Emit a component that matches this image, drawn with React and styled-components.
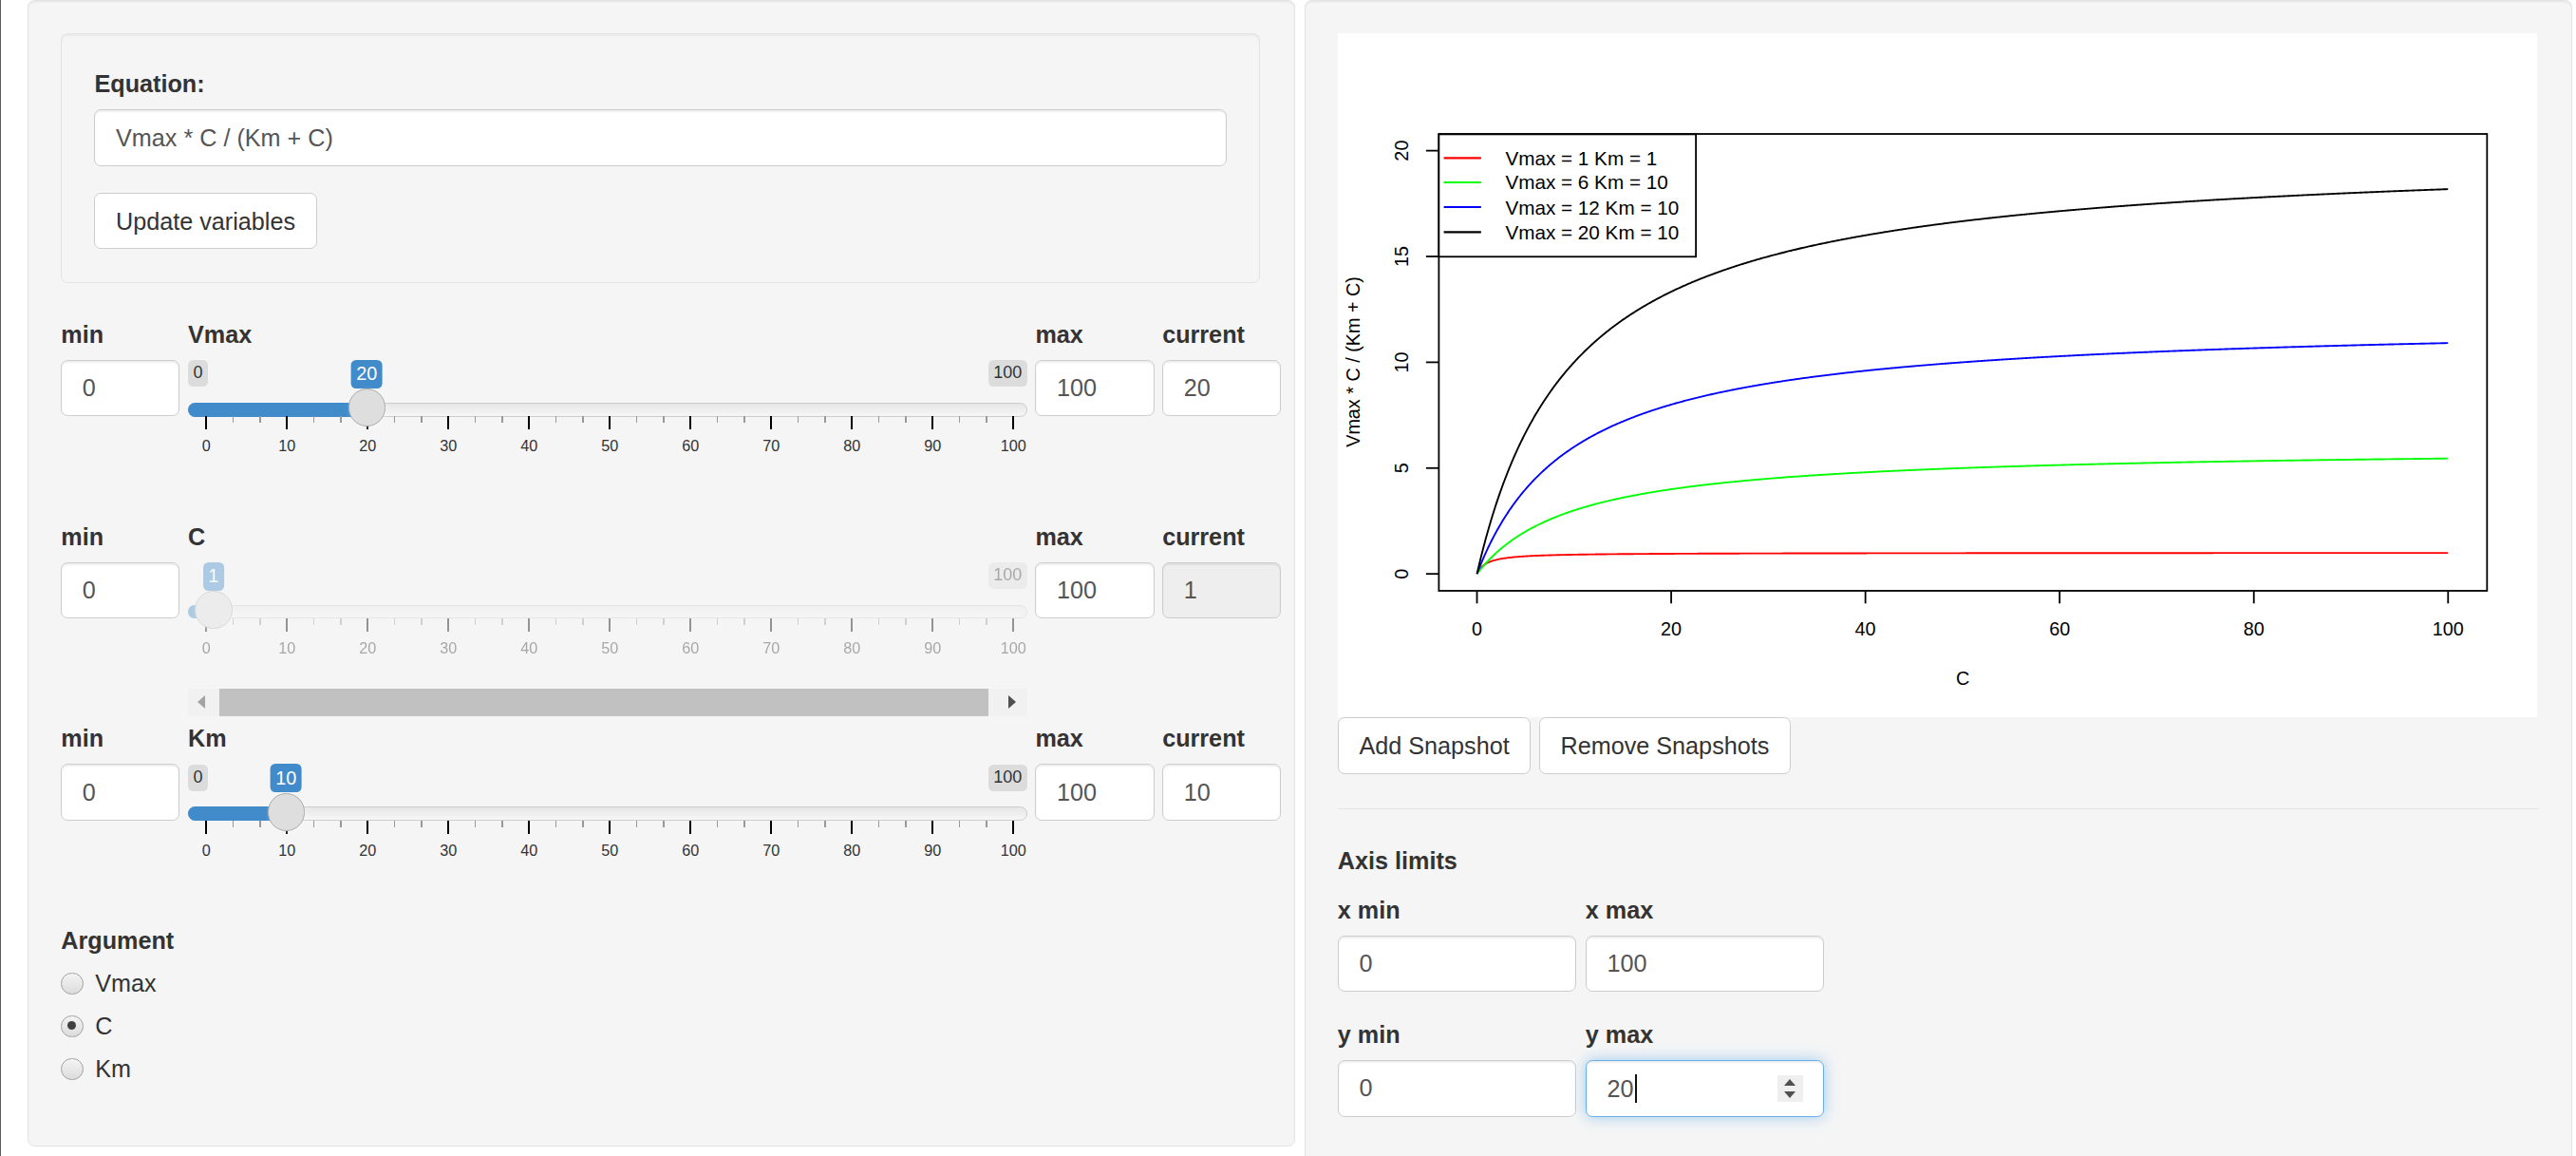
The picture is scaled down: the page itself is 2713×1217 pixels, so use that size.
import React from "react";
import styled, { createGlobalStyle } from "styled-components";

const GlobalStyle = createGlobalStyle`
  html { zoom: 1.8; overflow: hidden; }
  body {
    margin: 0;
    overflow: hidden;
    background: #fff;
    font-family: "Liberation Sans", Arial, Helvetica, sans-serif;
    font-size: 14px;
    line-height: 1.42857;
    color: #333;
  }
  *, *::before, *::after { box-sizing: border-box; }
`;

const Page = styled.div`
  display: flex;
  align-items: flex-start;
  gap: 5.6px;
  width: 1507px;
  min-height: 677px;
  padding: 0 0 0 15.6px;
  border-left: 1px solid #5b5b5b;
`;

const Well = styled.div`
  flex: none;
  width: ${(p) => p.$w}px;
  height: ${(p) => (p.$h ? `${p.$h}px` : "auto")};
  margin-bottom: ${(p) => p.$mb || 0}px;
  padding: 19px;
  background: #f5f5f5;
  border: 1px solid #e3e3e3;
  border-radius: 4px;
  box-shadow: inset 0 1px 1px rgba(0, 0, 0, 0.05);
`;

const FieldLabel = styled.label`
  display: block;
  font-weight: 700;
  line-height: 20px;
  margin-bottom: 5px;
  white-space: nowrap;
`;

const TextInput = styled.input`
  display: block;
  width: 100%;
  height: 33px;
  padding: 6px 12px;
  font-family: inherit;
  font-size: 14px;
  line-height: 20px;
  color: #555;
  background: ${(p) => (p.$disabled ? "#eee" : "#fff")};
  border: 1px solid #ccc;
  border-radius: 4px;
  box-shadow: inset 0 1px 1px rgba(0, 0, 0, 0.075);
  outline: none;
`;

const Button = styled.button`
  display: inline-block;
  height: 33px;
  margin-top: ${(p) => p.$mt || 0}px;
  padding: 6px 12px;
  font-family: inherit;
  font-size: 14px;
  line-height: 19px;
  color: #333;
  background: #fff;
  border: 1px solid #ccc;
  border-radius: 4px;
  white-space: nowrap;
  cursor: pointer;
`;

/* ---------- slider rows ---------- */

const SliderRow = styled.div`
  display: grid;
  grid-template-columns: 69.5px 491px 69.5px 69.5px;
  column-gap: 4.8px;
  align-items: start;
  height: 118.3px;
`;

const Cell = styled.div`
  display: flex;
  flex-direction: column;
`;

const Irs = styled.div`
  position: relative;
  height: 60px;
  opacity: ${(p) => (p.$disabled ? 0.4 : 1)};
`;

const IrsLine = styled.div`
  position: absolute;
  left: 0;
  right: 0;
  top: 25px;
  height: 8.3px;
  border: 1px solid #ccc;
  border-radius: 8px;
  background: linear-gradient(to bottom, #dedede -50%, #fff 150%);
`;

const IrsBar = styled.div`
  position: absolute;
  left: 0;
  top: 25px;
  height: 8.3px;
  background: #428bca;
  border-radius: 8px 0 0 8px;
`;

const IrsHandle = styled.span`
  position: absolute;
  top: 17px;
  width: 22px;
  height: 22px;
  margin-left: -11px;
  border: 1px solid #ababab;
  background: #dedede;
  border-radius: 50%;
  box-shadow: 1px 1px 3px rgba(255, 255, 255, 0.3);
`;

const IrsEdge = styled.span`
  position: absolute;
  top: 0.4px;
  ${(p) => (p.$right ? "right: 0;" : "left: 0;")}
  padding: 1px 3px;
  font-size: 10px;
  line-height: 1.333;
  color: #333;
  background: rgba(0, 0, 0, 0.1);
  border-radius: 3px;
`;

const IrsSingle = styled.span`
  position: absolute;
  top: 0;
  transform: translateX(-50%);
  padding: 1px 3px;
  font-size: 11px;
  line-height: 1.333;
  color: #fff;
  background: #428bca;
  border-radius: 3px;
  white-space: nowrap;
`;

const IrsGrid = styled.div`
  position: absolute;
  left: 10.2px;
  width: 472.2px;
  top: 33px;
  height: 27px;
`;

const GridPol = styled.span`
  position: absolute;
  top: 0;
  width: 1px;
  height: ${(p) => (p.$small ? 4 : 7.7)}px;
  background: ${(p) => (p.$small ? "#999" : "#000")};
`;

const GridText = styled.span`
  position: absolute;
  top: 12.5px;
  transform: translateX(-50%);
  font-size: 9px;
  line-height: 11px;
  color: #333;
  white-space: nowrap;
`;

const HScroll = styled.div`
  display: flex;
  align-items: stretch;
  height: 15.8px;
  margin-top: 14.3px;
  background: #f1f1f1;
`;

const ScrollArrow = styled.span`
  flex: none;
  width: ${(p) => (p.$dir === "left" ? 16 : 17)}px;
  display: flex;
  align-items: center;
  justify-content: center;
  &::before {
    content: "";
    width: 0;
    height: 0;
    border-top: 4px solid transparent;
    border-bottom: 4px solid transparent;
    ${(p) =>
      p.$dir === "left"
        ? `border-right: 4.5px solid ${p.$dim ? "#a3a3a3" : "#505050"};`
        : `border-left: 4.5px solid ${p.$dim ? "#a3a3a3" : "#505050"};`}
  }
`;

const ScrollThumb = styled.span`
  flex: none;
  width: 450px;
  margin-left: 2.6px;
  background: #c1c1c1;
`;

const ScrollSpacer = styled.span`
  flex: 1;
`;

/* ---------- radio group ---------- */

const RadioList = styled.div`
  display: flex;
  flex-direction: column;
  gap: 5px;
`;

const RadioItem = styled.label`
  display: flex;
  align-items: center;
  gap: 7px;
  height: 20px;
  font-weight: 400;
`;

const RadioDot = styled.span`
  position: relative;
  flex: none;
  width: 13px;
  height: 13px;
  border-radius: 50%;
  border: 1px solid #a2a2a2;
  background: linear-gradient(#f4f4f4, #dcdcdc);
  &::after {
    content: "";
    display: ${(p) => (p.$checked ? "block" : "none")};
    position: absolute;
    left: 3px;
    top: 3px;
    width: 5px;
    height: 5px;
    border-radius: 50%;
    background: #404040;
  }
`;

/* ---------- right column ---------- */

const PlotFrame = styled.div`
  width: 702px;
  height: 400px;
  background: #fff;
`;

const ButtonRow = styled.div`
  display: flex;
  gap: 4.8px;
`;

const Rule = styled.hr`
  margin: 20px 0;
  border: 0;
  border-top: 1px solid #e4e4e4;
`;

const SectionTitle = styled.div`
  font-weight: 700;
  line-height: 20px;
  margin-bottom: 9px;
`;

const LimitsGrid = styled.div`
  display: grid;
  grid-template-columns: 139.5px 139.5px;
  column-gap: 5.5px;
  row-gap: 15px;
`;

const FocusedField = styled.div`
  display: flex;
  align-items: center;
  height: 33px;
  padding: 6px 12px;
  color: #555;
  background: #fff;
  border: 1px solid #66afe9;
  border-radius: 4px;
  box-shadow: inset 0 1px 1px rgba(0, 0, 0, 0.075), 0 0 8px rgba(102, 175, 233, 0.6);
`;

const Caret = styled.span`
  width: 1px;
  height: 17px;
  margin-left: 1px;
  background: #111;
`;

const Grow = styled.span`
  flex: 1;
`;

const Spinner = styled.span`
  display: flex;
  flex-direction: column;
  align-items: center;
  justify-content: center;
  gap: 3px;
  width: 15.4px;
  height: 15.4px;
  margin-right: -0.5px;
  background: #efefef;
`;

const SpinArrow = styled.span`
  width: 0;
  height: 0;
  border-left: 3.5px solid transparent;
  border-right: 3.5px solid transparent;
  ${(p) => (p.$up ? "border-bottom: 4px solid #505050;" : "border-top: 4px solid #505050;")}
`;

/* ---------- slider ---------- */

const GRID_W = 472.2;
const GRID_L = 10.2;

function Slider({ value, disabled, hideMin }) {
  const pos = GRID_L + (value / 100) * GRID_W;
  const majors = Array.from({ length: 11 }, (_, i) => i * 10);
  const smalls = [];
  for (let i = 0; i < 10; i++) {
    smalls.push(i * 10 + 10 / 3, i * 10 + 20 / 3);
  }
  return (
    <Irs $disabled={disabled}>
      <IrsLine />
      <IrsBar style={{ width: pos }} />
      {!hideMin && <IrsEdge>0</IrsEdge>}
      <IrsEdge $right>100</IrsEdge>
      <IrsSingle style={{ left: pos }}>{value}</IrsSingle>
      <IrsGrid>
        {smalls.map((s) => (
          <GridPol key={`s${s}`} $small style={{ left: (s / 100) * GRID_W }} />
        ))}
        {majors.map((m) => (
          <GridPol key={`m${m}`} style={{ left: (m / 100) * GRID_W }} />
        ))}
        {majors.map((m) => (
          <GridText key={`t${m}`} style={{ left: (m / 100) * GRID_W + 0.5 }}>
            {m}
          </GridText>
        ))}
      </IrsGrid>
      <IrsHandle style={{ left: pos }} />
    </Irs>
  );
}

const sliders = [
  { name: "Vmax", value: 20 },
  { name: "C", value: 1, disabled: true, hideMin: true, scroll: true },
  { name: "Km", value: 10 },
];

/* ---------- plot ---------- */

const PX = (c) => 81.4 + c * 5.682;
const PY = (v) => 316.2 - v * 12.376;

function curve(V, K) {
  const pts = [];
  for (let i = 0; i <= 1000; i++) {
    const c = i / 10;
    const y = (V * c) / (K + c);
    pts.push(`${PX(c).toFixed(2)},${PY(y).toFixed(2)}`);
  }
  return "M" + pts.join("L");
}

const series = [
  { V: 1, K: 1, color: "#ff0000", label: "Vmax = 1 Km = 1" },
  { V: 6, K: 10, color: "#00ff00", label: "Vmax = 6 Km = 10" },
  { V: 12, K: 10, color: "#0000ff", label: "Vmax = 12 Km = 10" },
  { V: 20, K: 10, color: "#000000", label: "Vmax = 20 Km = 10" },
];

function Plot() {
  const yTicks = [0, 5, 10, 15, 20];
  const xTicks = [0, 20, 40, 60, 80, 100];
  const legendY = [73, 87.2, 101.7, 116.3];
  return (
    <svg width="702" height="400" viewBox="0 0 702 400" fontFamily="'Liberation Sans', Arial, sans-serif">
      {series.map((s) => (
        <path key={s.label} d={curve(s.V, s.K)} fill="none" stroke={s.color} strokeWidth="1.05" />
      ))}
      <rect x="59.1" y="58.9" width="613.3" height="267.2" fill="none" stroke="#000" strokeWidth="1" />
      {yTicks.map((v) => (
        <g key={`y${v}`}>
          <line x1="51.6" x2="59.1" y1={PY(v)} y2={PY(v)} stroke="#000" strokeWidth="1" />
          <text
            transform={`translate(37.2 ${PY(v)}) rotate(-90)`}
            textAnchor="middle"
            dominantBaseline="central"
            fontSize="11"
            fill="#000"
          >
            {v}
          </text>
        </g>
      ))}
      {xTicks.map((c) => (
        <g key={`x${c}`}>
          <line x1={PX(c)} x2={PX(c)} y1="326.1" y2="333.5" stroke="#000" strokeWidth="1" />
          <text x={PX(c)} y="348.3" textAnchor="middle" dominantBaseline="central" fontSize="11" fill="#000">
            {c}
          </text>
        </g>
      ))}
      <text x="365.7" y="377" textAnchor="middle" dominantBaseline="central" fontSize="11" fill="#000">
        C
      </text>
      <text
        transform="translate(9.1 192.2) rotate(-90)"
        textAnchor="middle"
        dominantBaseline="central"
        fontSize="11"
        fill="#000"
      >
        Vmax * C / (Km + C)
      </text>
      <rect x="59.1" y="59.1" width="150.4" height="71.6" fill="#fff" stroke="#000" strokeWidth="1" />
      {series.map((s, i) => (
        <g key={`l${s.label}`}>
          <line x1="62" x2="83.8" y1={legendY[i]} y2={legendY[i]} stroke={s.color} strokeWidth="1.15" />
          <text x="98" y={legendY[i]} dominantBaseline="central" fontSize="11.5" fill="#000">
            {s.label}
          </text>
        </g>
      ))}
    </svg>
  );
}

export default function App() {
  return (
    <>
      <GlobalStyle />
      <Page>
        <Well $w={741.4} $h={670.6}>
          <Well $w={701.4} $mb={20}>
            <FieldLabel>Equation:</FieldLabel>
            <TextInput readOnly value="Vmax * C / (Km + C)" />
            <Button $mt={15.7}>Update variables</Button>
          </Well>

          {sliders.map((s) => (
            <SliderRow key={s.name}>
              <Cell>
                <FieldLabel>min</FieldLabel>
                <TextInput readOnly value="0" />
              </Cell>
              <Cell>
                <FieldLabel>{s.name}</FieldLabel>
                <Slider value={s.value} disabled={s.disabled} hideMin={s.hideMin} />
                {s.scroll && (
                  <HScroll>
                    <ScrollArrow $dir="left" $dim />
                    <ScrollThumb />
                    <ScrollSpacer />
                    <ScrollArrow $dir="right" />
                  </HScroll>
                )}
              </Cell>
              <Cell>
                <FieldLabel>max</FieldLabel>
                <TextInput readOnly value="100" />
              </Cell>
              <Cell>
                <FieldLabel>current</FieldLabel>
                <TextInput readOnly value={String(s.value)} $disabled={s.disabled} />
              </Cell>
            </SliderRow>
          ))}

          <FieldLabel>Argument</FieldLabel>
          <RadioList>
            {["Vmax", "C", "Km"].map((n) => (
              <RadioItem key={n}>
                <RadioDot $checked={n === "C"} />
                {n}
              </RadioItem>
            ))}
          </RadioList>
        </Well>

        <Well $w={742} $h={700}>
          <PlotFrame>
            <Plot />
          </PlotFrame>
          <ButtonRow>
            <Button>Add Snapshot</Button>
            <Button>Remove Snapshots</Button>
          </ButtonRow>
          <Rule />
          <SectionTitle>Axis limits</SectionTitle>
          <LimitsGrid>
            <Cell>
              <FieldLabel>x min</FieldLabel>
              <TextInput readOnly value="0" />
            </Cell>
            <Cell>
              <FieldLabel>x max</FieldLabel>
              <TextInput readOnly value="100" />
            </Cell>
            <Cell>
              <FieldLabel>y min</FieldLabel>
              <TextInput readOnly value="0" />
            </Cell>
            <Cell>
              <FieldLabel>y max</FieldLabel>
              <FocusedField>
                20
                <Caret />
                <Grow />
                <Spinner>
                  <SpinArrow $up />
                  <SpinArrow />
                </Spinner>
              </FocusedField>
            </Cell>
          </LimitsGrid>
        </Well>
      </Page>
    </>
  );
}
